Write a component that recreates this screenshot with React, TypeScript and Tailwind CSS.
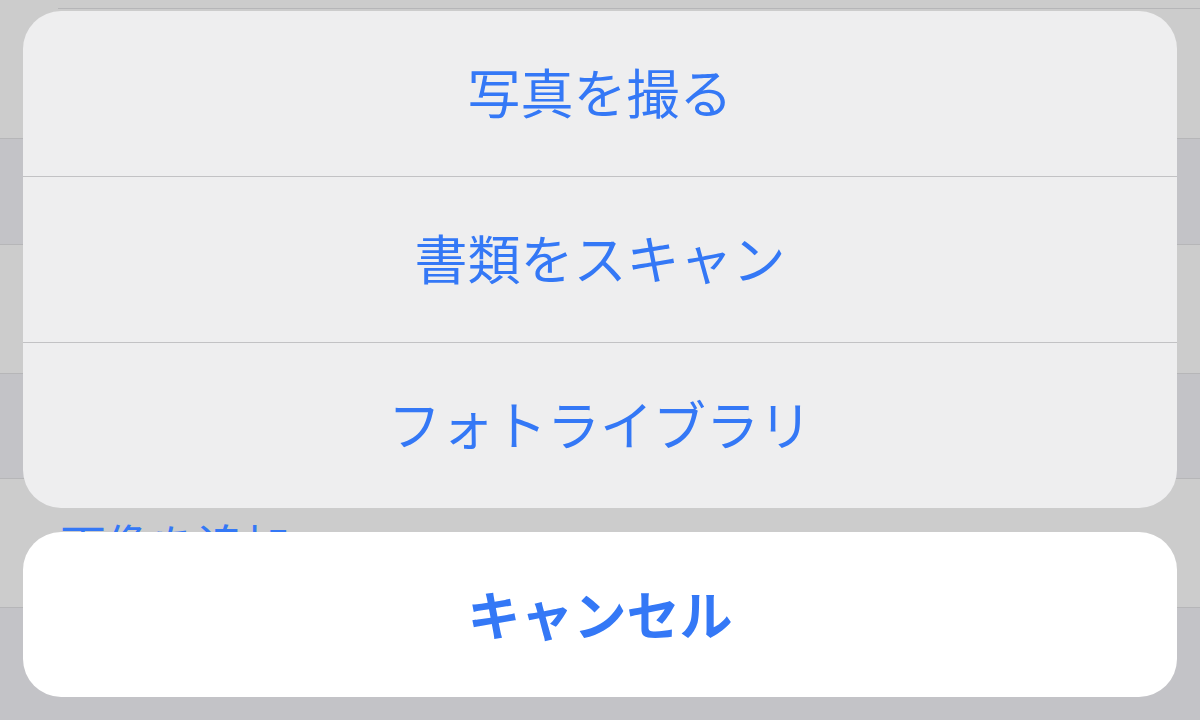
import React from "react";

const font = { fontFamily: '"Noto Sans CJK JP", "Noto Sans", sans-serif' };

export default function App() {
  return (
    <div
      className="relative w-[1200px] h-[720px] overflow-hidden bg-[#c3c3c7]"
      style={font}
    >
      {/* dimmed background list */}
      <div className="flex flex-col w-full h-full">
        <div className="h-[8px] bg-[#cccccc]" />
        <div className="h-[1px] flex">
          <div className="w-[58px] bg-[#cccccc]" />
          <div className="flex-1 bg-[#b6b6b8]" />
        </div>
        <div className="h-[130px] bg-[#cccccc] border-b border-[#b6b6b8]" />
        <div className="h-[106px] bg-[#c3c3c7] border-b border-[#b6b6b8]" />
        <div className="h-[129px] bg-[#cccccc] border-b border-[#b6b6b8]" />
        <div className="h-[105px] bg-[#c3c3c7] border-b border-[#b6b6b8]" />
        <div className="h-[129px] bg-[#cccccc] border-b border-[#b6b6b8] flex items-center pl-[60px]">
          <span className="text-[46px] leading-none text-[#3478f6]">画像を追加</span>
        </div>
        <div className="flex-1 bg-[#c3c3c7]" />
      </div>

      {/* action sheet overlay */}
      <div className="absolute inset-0 flex flex-col px-[23px] pt-[11px]">
        <div className="w-[1154px] rounded-[38px] overflow-hidden bg-[#eeeeef] flex flex-col">
          <div className="h-[165px] flex items-center justify-center pb-[5px]">
            <span className="text-[53px] leading-none text-[#3478f6]">写真を撮る</span>
          </div>
          <div className="h-[1px] bg-[#c2c2c4]" />
          <div className="h-[165px] flex items-center justify-center pb-[5px]">
            <span className="text-[53px] leading-none text-[#3478f6]">書類をスキャン</span>
          </div>
          <div className="h-[1px] bg-[#c2c2c4]" />
          <div className="h-[165px] flex items-center justify-center pb-[5px]">
            <span className="text-[53px] leading-none text-[#3478f6]">フォトライブラリ</span>
          </div>
        </div>
        <div className="mt-[24px] w-[1154px] h-[165px] rounded-[38px] bg-white flex items-center justify-center pb-[3px]">
          <span className="text-[53px] leading-none font-bold text-[#3478f6]">キャンセル</span>
        </div>
      </div>
    </div>
  );
}
